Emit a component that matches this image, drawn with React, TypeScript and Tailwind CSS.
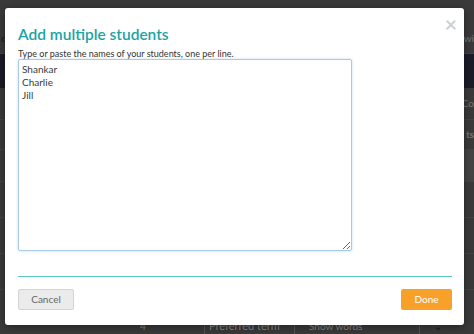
import React, { useEffect, useRef } from "react";

const font = { fontFamily: "Lato, 'Noto Sans', Arial, sans-serif" };

function Backdrop() {
  return (
    <div className="flex h-[334px] w-[474px] flex-col bg-[#3a3a3a] text-[10px] text-[#777]">
      <div className="h-[24px]" />
      <div className="flex h-[30px] items-center justify-between border-b border-[#444]">
        <span className="pl-[1px] font-bold text-[#222]">o</span>
        <span>wi</span>
      </div>
      <div className="flex h-[34px] justify-between">
        <div className="w-[8px] bg-[#1c1c28]" />
        <div className="w-[12px] bg-[#1c1c28]" />
      </div>
      <div className="flex h-[32px] items-center justify-end border-b border-[#444]">
        <span>Co</span>
      </div>
      <div className="flex h-[30px] items-center justify-end border-b border-[#444]">
        <span className="font-bold">ts</span>
      </div>
      <div className="flex h-[32px] justify-end border-b border-[#444]">
        <div className="w-[10px] bg-[#444]" />
      </div>
      <div className="h-[36px] border-b border-[#444]" />
      <div className="h-[36px] border-b border-[#444]" />
      <div className="h-[36px] border-b border-[#444]" />
      <div className="flex h-[44px] items-end">
        <div className="flex w-full items-end text-[#888]">
          <span className="ml-[140px] w-[65px] border-r border-[#555]">4</span>
          <span className="w-[90px] border-r border-[#555] pl-[4px] text-[11px]">Preferred term</span>
          <span className="w-[125px] border-r border-[#555] pl-[14px]">Show words</span>
          <span className="pl-[14px] font-bold text-[#222]">⌄</span>
        </div>
      </div>
    </div>
  );
}

export default function App() {
  const ref = useRef<HTMLTextAreaElement>(null);
  useEffect(() => {
    const el = ref.current;
    if (el) {
      el.focus();
      el.setSelectionRange(7, 7);
    }
  }, []);

  return (
    <div className="relative h-[334px] w-[474px] overflow-hidden" style={font}>
      <Backdrop />
      <div className="absolute left-[5px] top-[8px] flex h-[317px] w-[459px] flex-col rounded-[3px] bg-white pl-[13px] pr-[12px] shadow-[0_2px_8px_rgba(0,0,0,0.4)]">
        <button className="absolute right-[7px] top-[5px] text-[21px] font-bold leading-none text-[#d0d0d0]">×</button>
        <h2 className="mt-[16px] text-[15.5px] font-semibold leading-[21px] text-[#1aa3a6]">Add multiple students</h2>
        <p className="mt-[3px] text-[9px] leading-[11px] text-[#333]">Type or paste the names of your students, one per line.</p>
        <textarea
          ref={ref}
          className="h-[192px] w-[334px] resize-y rounded-[2px] border border-[#a9c9e6] px-[3px] py-[3px] text-[10px] font-normal leading-[13px] text-[#3a3a3a] caret-[#333] shadow-[0_0_3px_rgba(120,170,220,0.4)] outline-none"
          defaultValue={"Shankar\nCharlie\nJill"}
          style={font}
        />
        <div className="mt-[25px] h-[1px] w-full bg-[#5cc8c2]" />
        <div className="mt-[12px] flex items-center justify-between">
          <button className="h-[21px] w-[56px] rounded-[2px] border border-[#d4d4d4] bg-[#ebebeb] text-[10px] text-[#666]">Cancel</button>
          <button className="h-[21px] w-[51px] rounded-[2px] bg-[#f8a12a] text-[10px] text-white">Done</button>
        </div>
      </div>
    </div>
  );
}
